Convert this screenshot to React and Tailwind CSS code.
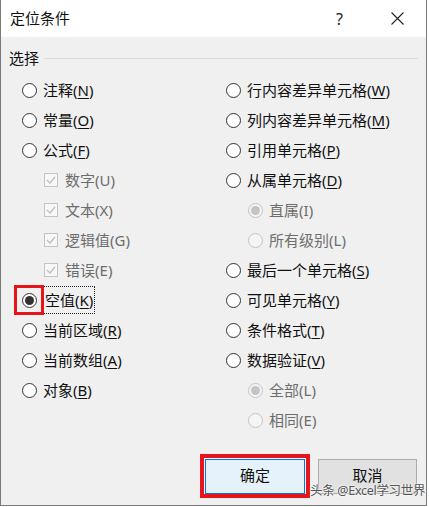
import React from 'react';

const font = { fontFamily: '"Noto Sans", "Noto Sans CJK SC", sans-serif' };

function Radio({ checked, disabled }) {
  const ring = disabled ? 'border-[#c4c4c4] bg-[#f5f5f5]' : 'border-[#333333] bg-white';
  const dot = disabled ? 'bg-[#c4c4c4]' : 'bg-[#333333]';
  return (
    <span className={`w-[15px] h-[15px] shrink-0 rounded-full border flex items-center justify-center ${ring}`}>
      {checked && <span className={`w-[9px] h-[9px] rounded-full ${dot}`} />}
    </span>
  );
}

function Check() {
  return (
    <span className="w-[14px] h-[14px] shrink-0 border border-[#c4c4c4] bg-[#f7f7f7] flex items-center justify-center">
      <svg width="10" height="10" viewBox="0 0 10 10">
        <polyline points="1,5 4,8 9,2" fill="none" stroke="#bdbdbd" strokeWidth="1.2" />
      </svg>
    </span>
  );
}

function Label({ text, k, disabled }) {
  return (
    <span className={`text-[15px] leading-[20px] whitespace-nowrap ${disabled ? 'text-[#6d6d6d]' : 'text-[#111]'}`}>
      {text}(
      {disabled ? k : <span className="underline underline-offset-2">{k}</span>})
    </span>
  );
}

function Row({ text, k, kind = 'radio', indent, checked, disabled, focus, mark }) {
  return (
    <div className={`h-[30px] flex items-center ${indent ? 'pl-[22px]' : ''}`}>
      <span className="relative flex items-center">
        {kind === 'check' ? <Check /> : <Radio checked={checked} disabled={disabled} />}
        {mark && <span className="absolute left-[-8px] top-[-7.5px] w-[30px] h-[30px] border-[3px] border-[#e8141c]" />}
      </span>
      {focus ? (
        <span className="ml-[6px] border border-dotted border-[#222] px-[1px] py-[1px]">
          <Label text={text} k={k} disabled={disabled} />
        </span>
      ) : (
        <span className={kind === 'check' ? 'ml-[7px]' : 'ml-[6px]'}>
          <Label text={text} k={k} disabled={disabled} />
        </span>
      )}
    </div>
  );
}

export default function App() {
  const left = [
    { text: '注释', k: 'N' },
    { text: '常量', k: 'O' },
    { text: '公式', k: 'F' },
    { text: '数字', k: 'U', kind: 'check', indent: true, disabled: true },
    { text: '文本', k: 'X', kind: 'check', indent: true, disabled: true },
    { text: '逻辑值', k: 'G', kind: 'check', indent: true, disabled: true },
    { text: '错误', k: 'E', kind: 'check', indent: true, disabled: true },
    { text: '空值', k: 'K', checked: true, focus: true, mark: true },
    { text: '当前区域', k: 'R' },
    { text: '当前数组', k: 'A' },
    { text: '对象', k: 'B' },
  ];
  const right = [
    { text: '行内容差异单元格', k: 'W' },
    { text: '列内容差异单元格', k: 'M' },
    { text: '引用单元格', k: 'P' },
    { text: '从属单元格', k: 'D' },
    { text: '直属', k: 'I', indent: true, disabled: true, checked: true },
    { text: '所有级别', k: 'L', indent: true, disabled: true },
    { text: '最后一个单元格', k: 'S' },
    { text: '可见单元格', k: 'Y' },
    { text: '条件格式', k: 'T' },
    { text: '数据验证', k: 'V' },
    { text: '全部', k: 'L', indent: true, disabled: true, checked: true },
    { text: '相同', k: 'E', indent: true, disabled: true },
  ];

  return (
    <div className="w-[429px] h-[507px] bg-white" style={font}>
      <div className="relative w-[427px] h-[506px] border border-t-0 border-[#7a7a7a] bg-[#f0f0f0] flex flex-col">
        <div className="h-[37px] bg-white flex items-center pl-[9px] pr-[22px]">
          <span className="text-[15px] text-[#111] flex-1">定位条件</span>
          <span className="text-[16px] text-[#222] mr-[48px]">?</span>
          <svg width="13" height="13" viewBox="0 0 13 13">
            <path d="M0.5 0.5 L12.5 12.5 M12.5 0.5 L0.5 12.5" stroke="#222" strokeWidth="1.1" />
          </svg>
        </div>

        <div className="flex-1 flex flex-col">
          <div className="h-[22px] mt-[10px] flex items-center pl-[8px] pr-[8px]">
            <span className="text-[15px] text-[#111]">选择</span>
            <span className="flex-1 ml-[5px] h-px bg-[#dcdcdc]" />
          </div>

          <div className="mt-[6px] grid grid-cols-[204px_1fr] pl-[21px]">
            <div className="flex flex-col">
              {left.map((r, i) => (
                <Row key={i} {...r} />
              ))}
            </div>
            <div className="flex flex-col">
              {right.map((r, i) => (
                <Row key={i} {...r} />
              ))}
            </div>
          </div>

          <div className="mt-auto mb-[11px] flex justify-end gap-[13px] pr-[9px]">
            <div className="relative">
              <button className="w-[100px] h-[35px] pb-[3px] bg-[#e5f1fb] border border-[#0078d7] text-[15px] leading-[15px] text-[#111]">确定</button>
              <span className="absolute left-[-5px] top-[-5px] right-[-5px] bottom-[-4px] border-[4px] border-[#e8141c]" />
            </div>
            <button className="w-[99px] h-[35px] pb-[3px] bg-[#e1e1e1] border border-[#adadad] text-[15px] leading-[15px] text-[#111]">取消</button>
          </div>
        </div>

        <span
          className="absolute left-[309px] top-[484px] text-[12.5px] leading-[13px] text-[#555] whitespace-nowrap tracking-[-0.3px]"
          style={{ textShadow: '0 0 2px #fff, 0 0 2px #fff' }}
        >
          头条 @Excel学习世界
        </span>
      </div>
    </div>
  );
}
